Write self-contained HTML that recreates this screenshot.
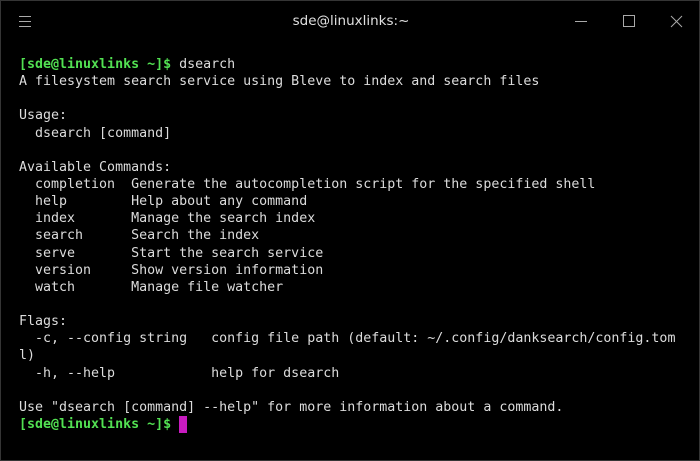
<!DOCTYPE html>
<html><head><style>
html,body{margin:0;padding:0;background:#000;}
body{width:700px;height:461px;position:relative;overflow:hidden;box-sizing:border-box;border:1px solid #353535;}
.title{position:absolute;top:12px;left:0;width:700px;text-align:center;font:13.5px "DejaVu Sans",sans-serif;color:#e0e0e0;}
pre{position:absolute;left:18px;top:55px;margin:0;font:13.3px/17.14px "DejaVu Sans Mono",monospace;color:#dcdcdc;}
.g{color:#52e052;font-weight:bold;}
.cur{display:inline-block;width:8px;height:17px;background:#c81bc0;vertical-align:top;}
</style></head><body>
<svg width="700" height="40" style="position:absolute;top:0;left:0">
<g stroke="#aaa" stroke-width="1" fill="none">
<line x1="18" y1="15.5" x2="30" y2="15.5"/><line x1="18" y1="20.5" x2="30" y2="20.5"/><line x1="18" y1="25.5" x2="30" y2="25.5"/>
<line x1="574" y1="20.5" x2="586" y2="20.5"/>
<rect x="622.5" y="14.5" width="11" height="11"/>
<line x1="670" y1="15" x2="681" y2="26"/><line x1="681" y1="15" x2="670" y2="26"/>
</g></svg>
<div class="title">sde@linuxlinks:~</div>
<pre><span class="g">[sde@linuxlinks ~]$</span> dsearch
A filesystem search service using Bleve to index and search files

Usage:
  dsearch [command]

Available Commands:
  completion  Generate the autocompletion script for the specified shell
  help        Help about any command
  index       Manage the search index
  search      Search the index
  serve       Start the search service
  version     Show version information
  watch       Manage file watcher

Flags:
  -c, --config string   config file path (default: ~/.config/danksearch/config.tom
l)
  -h, --help            help for dsearch

Use "dsearch [command] --help" for more information about a command.
<span class="g">[sde@linuxlinks ~]$</span> <span class="cur"></span></pre>
</body></html>
